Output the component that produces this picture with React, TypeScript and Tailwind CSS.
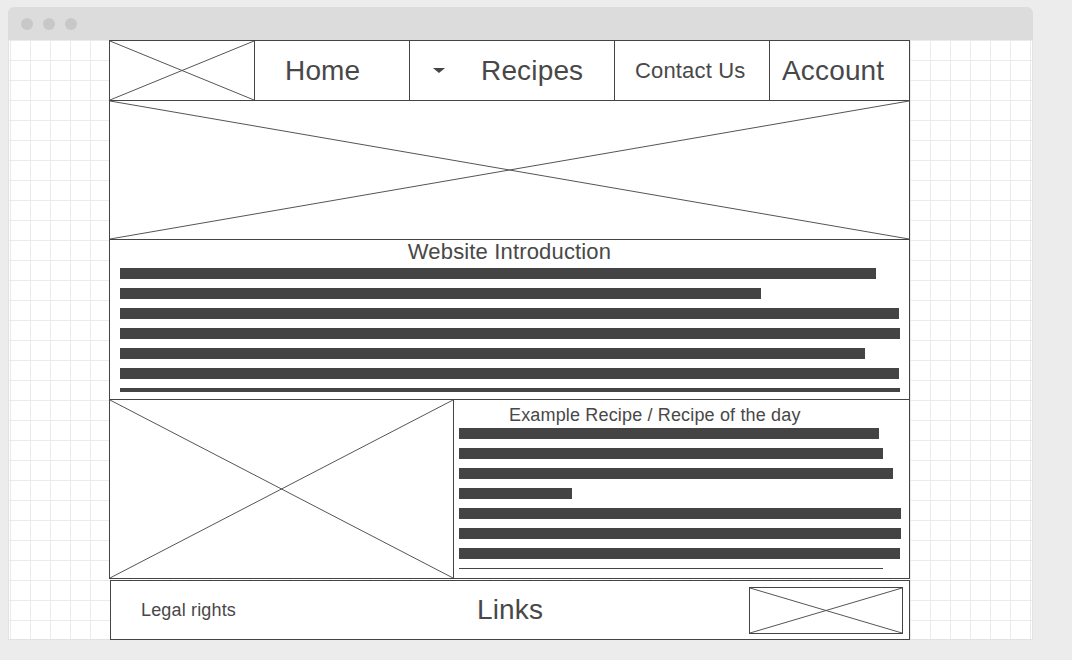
import React from "react";

// wireframe placeholder: box crossed corner to corner
function Cross() {
  return (
    <svg className="w-full h-full block" viewBox="0 0 100 100" preserveAspectRatio="none">
      <line x1="0" y1="0" x2="100" y2="100" stroke="#555" strokeWidth="1" vectorEffect="non-scaling-stroke" />
      <line x1="100" y1="0" x2="0" y2="100" stroke="#555" strokeWidth="1" vectorEffect="non-scaling-stroke" />
    </svg>
  );
}

function Bar({ w, h = 11 }: { w: number; h?: number }) {
  return <div className="bg-[#444] shrink-0" style={{ width: w, height: h }} />;
}

const introBars = [756, 641, 779, 780, 745, 779];
const recipeBars = [420, 424, 434, 113, 442, 442, 441];

export default function App() {
  return (
    <div className="min-h-screen bg-[#ececec] pt-[7px] pl-[8px] font-['Liberation_Sans',Arial,sans-serif] tracking-[0.01em] text-[#484848]">
      <div className="w-[1025px]">
        <div className="h-[33px] rounded-t-[6px] bg-[#dcdcdc] flex items-center gap-[10px] pl-[13px]">
          <span className="w-3 h-3 rounded-full bg-[#c8c8c8]" />
          <span className="w-3 h-3 rounded-full bg-[#c8c8c8]" />
          <span className="w-3 h-3 rounded-full bg-[#c8c8c8]" />
        </div>

        <div className="h-[600px] border-x border-b border-[#e2e2e2] bg-white bg-[linear-gradient(to_right,#ebebeb_1px,transparent_1px),linear-gradient(to_bottom,#ebebeb_1px,transparent_1px)] bg-[size:20px_20px] bg-[position:1px_0px] pl-[100px]">
          <div className="w-[801px] border border-[#444] bg-white">
            {/* nav */}
            <div className="h-[60px] border-b border-[#444] flex">
              <div className="w-[145px] border-r border-[#444]">
                <Cross />
              </div>
              <div className="w-[155px] border-r border-[#444] flex items-center pl-[30px] text-[28px] leading-none">
                Home
              </div>
              <div className="w-[205px] border-r border-[#444] flex items-center pl-[23px]">
                <svg width="12" height="5" viewBox="0 0 12 5" className="block">
                  <polygon points="0,0 12,0 6,5" fill="#444" />
                </svg>
                <span className="ml-[36px] text-[28px] leading-none">Recipes</span>
              </div>
              <div className="w-[155px] border-r border-[#444] flex items-center pl-[20px] text-[22px] leading-none">
                Contact Us
              </div>
              <div className="flex-1 flex items-center pl-[12px] text-[28px] leading-none">Account</div>
            </div>

            {/* hero */}
            <div className="h-[139px] border-b border-[#444]">
              <Cross />
            </div>

            {/* intro */}
            <div className="h-[160px] border-b border-[#444] overflow-hidden pt-px">
              <div className="text-center text-[22px] leading-none">Website Introduction</div>
              <div className="mt-[5px] pl-[10px] flex flex-col gap-[9px]">
                {introBars.map((w, i) => (
                  <Bar key={i} w={w} />
                ))}
                <Bar w={780} h={4} />
              </div>
            </div>

            {/* recipe of the day */}
            <div className="h-[178px] flex">
              <div className="w-[344px] border-r border-[#444]">
                <Cross />
              </div>
              <div className="flex-1 pl-[5px] pt-[6px]">
                <div className="ml-[50px] text-[18px] leading-none">Example Recipe / Recipe of the day</div>
                <div className="mt-[4px] flex flex-col gap-[9px]">
                  {recipeBars.map((w, i) => (
                    <Bar key={i} w={w} />
                  ))}
                  <div className="h-px w-[424px] bg-[#444]" />
                </div>
              </div>
            </div>
          </div>

          {/* footer */}
          <div className="mt-px ml-px w-[800px] h-[60px] border border-[#444] bg-white grid grid-cols-[1fr_auto_1fr] items-center">
            <div className="pl-[30px] text-[18px] leading-none">Legal rights</div>
            <div className="text-[28px] leading-none">Links</div>
            <div className="flex justify-end pr-[6px]">
              <div className="w-[154px] h-[47px] border border-[#444]">
                <Cross />
              </div>
            </div>
          </div>
        </div>
      </div>
    </div>
  );
}
